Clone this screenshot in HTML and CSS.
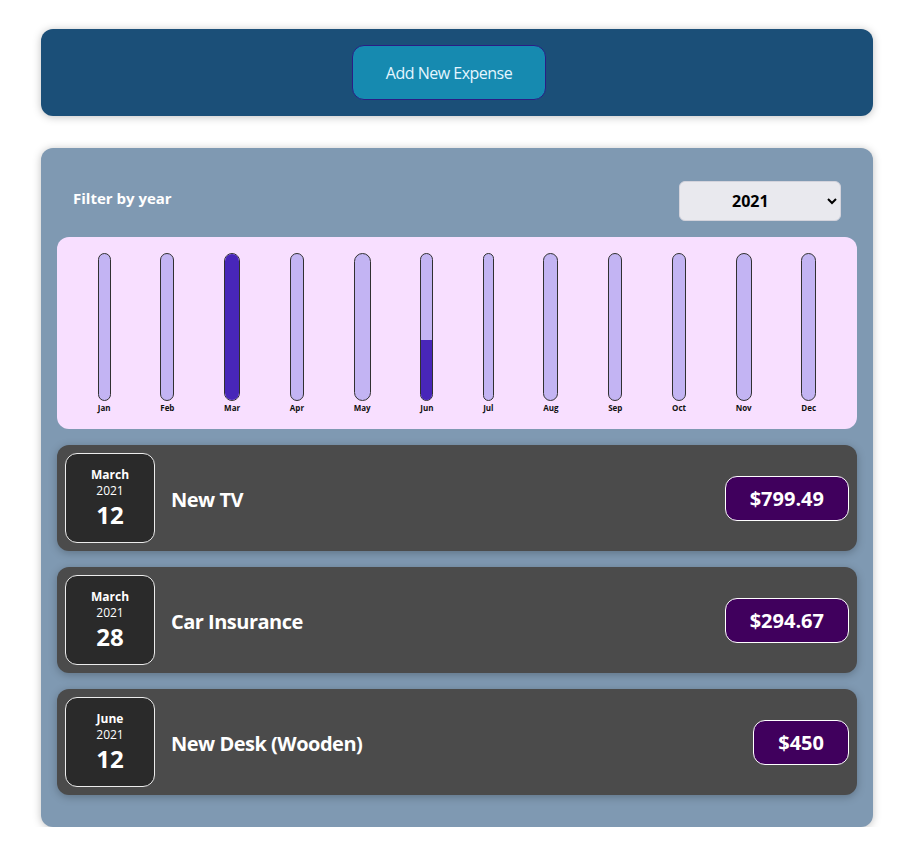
FILE: index.html
```html
<!DOCTYPE html>
<html lang="en">
<head>
<meta charset="utf-8">
<title>Expenses</title>
<link rel="stylesheet" href="styles.css">
</head>
<body>
<div class="app">
  <div class="new-expense">
    <button class="add-btn" type="button">Add New Expense</button>
  </div>

  <div class="expenses">
    <div class="filter">
      <label class="filter-label">Filter by year</label>
      <select class="filter-select">
        <option>2022</option>
        <option selected>2021</option>
        <option>2020</option>
        <option>2019</option>
      </select>
    </div>

    <div class="chart">
      <div class="chart-bar"><div class="bar-inner"><div class="bar-fill" style="height:0%"></div></div><div class="bar-label">Jan</div></div>
      <div class="chart-bar"><div class="bar-inner"><div class="bar-fill" style="height:0%"></div></div><div class="bar-label">Feb</div></div>
      <div class="chart-bar"><div class="bar-inner"><div class="bar-fill" style="height:100%"></div></div><div class="bar-label">Mar</div></div>
      <div class="chart-bar"><div class="bar-inner"><div class="bar-fill" style="height:0%"></div></div><div class="bar-label">Apr</div></div>
      <div class="chart-bar"><div class="bar-inner"><div class="bar-fill" style="height:0%"></div></div><div class="bar-label">May</div></div>
      <div class="chart-bar"><div class="bar-inner"><div class="bar-fill" style="height:41%"></div></div><div class="bar-label">Jun</div></div>
      <div class="chart-bar"><div class="bar-inner"><div class="bar-fill" style="height:0%"></div></div><div class="bar-label">Jul</div></div>
      <div class="chart-bar"><div class="bar-inner"><div class="bar-fill" style="height:0%"></div></div><div class="bar-label">Aug</div></div>
      <div class="chart-bar"><div class="bar-inner"><div class="bar-fill" style="height:0%"></div></div><div class="bar-label">Sep</div></div>
      <div class="chart-bar"><div class="bar-inner"><div class="bar-fill" style="height:0%"></div></div><div class="bar-label">Oct</div></div>
      <div class="chart-bar"><div class="bar-inner"><div class="bar-fill" style="height:0%"></div></div><div class="bar-label">Nov</div></div>
      <div class="chart-bar"><div class="bar-inner"><div class="bar-fill" style="height:0%"></div></div><div class="bar-label">Dec</div></div>
    </div>

    <ul class="expense-list">
      <li class="expense-item">
        <div class="expense-date">
          <div class="date-month">March</div>
          <div class="date-year">2021</div>
          <div class="date-day">12</div>
        </div>
        <div class="expense-desc">
          <h2 class="expense-title">New TV</h2>
          <div class="expense-price">$799.49</div>
        </div>
      </li>
      <li class="expense-item">
        <div class="expense-date">
          <div class="date-month">March</div>
          <div class="date-year">2021</div>
          <div class="date-day">28</div>
        </div>
        <div class="expense-desc">
          <h2 class="expense-title">Car Insurance</h2>
          <div class="expense-price">$294.67</div>
        </div>
      </li>
      <li class="expense-item">
        <div class="expense-date">
          <div class="date-month">June</div>
          <div class="date-year">2021</div>
          <div class="date-day">12</div>
        </div>
        <div class="expense-desc">
          <h2 class="expense-title">New Desk (Wooden)</h2>
          <div class="expense-price">$450</div>
        </div>
      </li>
    </ul>
  </div>
</div>
</body>
</html>
```

FILE: styles.css
```css
* {
  box-sizing: border-box;
}

html, body {
  margin: 0;
  padding: 0;
  background: #ffffff;
  font-family: "Open Sans", "Noto Sans", sans-serif;
}

.app {
  padding: 29px 38px 0 41px;
}

.new-expense {
  background-color: #1b4f78;
  padding: 16px;
  width: 832px;
  height: 87px;
  border-radius: 12px;
  text-align: center;
  box-shadow: 0 1px 8px rgba(0, 0, 0, 0.25);
  display: flex;
  justify-content: center;
  align-items: center;
}

.add-btn {
  font: inherit;
  font-size: 16px;
  letter-spacing: -0.5px;
  width: 194px;
  height: 55px;
  margin-right: 16px;
  color: #e4f6ff;
  background-color: #168ab0;
  border: 1px solid #2b1d84;
  border-radius: 12px;
  cursor: pointer;
}

.expenses {
  margin-top: 32px;
  width: 832px;
  padding: 16px;
  background-color: #7f99b2;
  border-radius: 12px;
  box-shadow: 0 1px 8px rgba(0, 0, 0, 0.25);
}

.filter {
  display: flex;
  align-items: center;
  justify-content: space-between;
  padding: 0 16px;
  margin: 17px 0 16px;
  height: 40px;
}

.filter-label {
  color: #ffffff;
  font-weight: bold;
  font-size: 15px;
  margin-top: -7px;
}

.filter-select {
  font: inherit;
  font-size: 16px;
  font-weight: bold;
  width: 162px;
  height: 40px;
  padding: 0 8px 0 48px;
  color: #000;
  background-color: #e9e9ee;
  border: 1px solid #d3d3dc;
  border-radius: 6px;
}

.chart {
  height: 192px;
  padding: 16px;
  border-radius: 12px;
  background-color: #f8dfff;
  display: flex;
  justify-content: space-around;
}

.chart-bar {
  height: 100%;
  display: flex;
  flex-direction: column;
  align-items: center;
}

.bar-inner {
  height: 100%;
  width: 100%;
  border: 1px solid #313131;
  border-radius: 12px;
  background-color: #c3b4f3;
  overflow: hidden;
  display: flex;
  flex-direction: column;
  justify-content: flex-end;
}

.bar-fill {
  width: 100%;
  background-color: #4826b9;
}

.bar-label {
  font-weight: bold;
  font-size: 8px;
  line-height: 10px;
  color: #111;
  padding-top: 2px;
  flex: none;
}

.expense-list {
  list-style: none;
  margin: 0;
  padding: 0;
}

.expense-item {
  display: flex;
  align-items: center;
  padding: 8px;
  margin: 16px 0;
  border-radius: 12px;
  background-color: #4b4b4b;
  box-shadow: 0 2px 8px rgba(0, 0, 0, 0.25);
}

.expense-date {
  width: 90px;
  height: 90px;
  flex: none;
  border: 1px solid #ececec;
  border-radius: 12px;
  background-color: #2a2a2a;
  color: #ffffff;
  display: flex;
  flex-direction: column;
  align-items: center;
  justify-content: center;
  padding-top: 2px;
}

.date-month {
  font-size: 12px;
  font-weight: bold;
  line-height: 16px;
}

.date-year {
  font-size: 12px;
  line-height: 16px;
}

.date-day {
  font-size: 24px;
  font-weight: bold;
  line-height: 32px;
}

.expense-desc {
  flex: 1;
  display: flex;
  align-items: center;
}

.expense-title {
  flex: 1;
  margin: 2px 16px 0;
  font-size: 20px;
  letter-spacing: -0.5px;
  color: #ffffff;
}

.expense-price {
  font-size: 20px;
  font-weight: bold;
  color: #ffffff;
  background-color: #40005d;
  border: 1px solid #ffffff;
  border-radius: 12px;
  padding: 8px 24px;
  line-height: 27px;
}
```
